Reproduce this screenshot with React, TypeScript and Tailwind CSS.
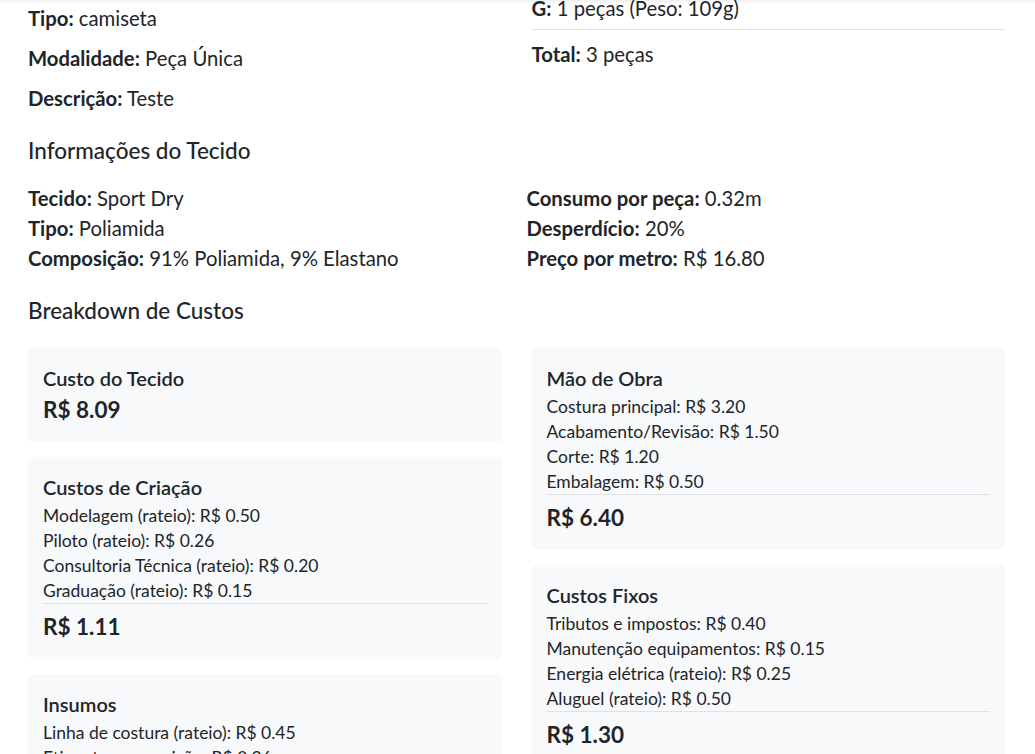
import React from "react";

// ─── Data ─────────────────────────────────────────────────────────────────────

type CostCard = {
  title: string;
  items?: string[];
  total: string;
};

const LEFT_CARDS: CostCard[] = [
  { title: "Custo do Tecido", total: "R$ 8.09" },
  {
    title: "Custos de Criação",
    items: [
      "Modelagem (rateio): R$ 0.50",
      "Piloto (rateio): R$ 0.26",
      "Consultoria Técnica (rateio): R$ 0.20",
      "Graduação (rateio): R$ 0.15",
    ],
    total: "R$ 1.11",
  },
  {
    title: "Insumos",
    items: [
      "Linha de costura (rateio): R$ 0.45",
      "Etiqueta composição: R$ 0.36",
      "Tag: R$ 0.30",
    ],
    total: "R$ 1.11",
  },
];

const RIGHT_CARDS: CostCard[] = [
  {
    title: "Mão de Obra",
    items: [
      "Costura principal: R$ 3.20",
      "Acabamento/Revisão: R$ 1.50",
      "Corte: R$ 1.20",
      "Embalagem: R$ 0.50",
    ],
    total: "R$ 6.40",
  },
  {
    title: "Custos Fixos",
    items: [
      "Tributos e impostos: R$ 0.40",
      "Manutenção equipamentos: R$ 0.15",
      "Energia elétrica (rateio): R$ 0.25",
      "Aluguel (rateio): R$ 0.50",
    ],
    total: "R$ 1.30",
  },
];

// ─── Bits ─────────────────────────────────────────────────────────────────────

function Field({ label, value }: { label: string; value: string }) {
  return (
    <p className="text-[20.3px] leading-[30px]">
      <strong className="font-bold">{label}:</strong> {value}
    </p>
  );
}

function Card({ card }: { card: CostCard }) {
  return (
    <div className="rounded-[5px] bg-[#f8f9fa] p-[15px]">
      <h4 className="text-[20px] leading-[30px] font-semibold">{card.title}</h4>
      {card.items ? (
        <>
          <div className="mt-[1px] text-[17.5px] leading-[25px]">
            {card.items.map((it) => (
              <div key={it}>{it}</div>
            ))}
          </div>
          <div className="border-t border-[#dee2e6] pt-[5px] text-[22.5px] leading-[35px] font-bold">
            {card.total}
          </div>
        </>
      ) : (
        <div className="text-[22.5px] leading-[34px] font-bold">{card.total}</div>
      )}
    </div>
  );
}

// ─── Page ─────────────────────────────────────────────────────────────────────

export default function App() {
  return (
    <div className="relative min-h-screen overflow-hidden bg-white text-[#212529] font-['Lato','Noto_Sans',sans-serif]">
      {/* faint shadow from the header above */}
      <div className="pointer-events-none absolute inset-x-0 top-0 h-[4px] bg-gradient-to-b from-black/[0.06] to-transparent" />

      <div className="pl-[28px] pr-[30px]">
        {/* Product summary */}
        <div className="-mt-[7px] grid grid-cols-2 gap-[30px]">
          <div className="flex flex-col gap-[10px] pt-[10px]">
            <Field label="Tipo" value="camiseta" />
            <Field label="Modalidade" value="Peça Única" />
            <Field label="Descrição" value="Teste" />
          </div>
          <div>
            <div className="border-b border-[#dee2e6] pb-[6px]">
              <Field label="G" value="1 peças (Peso: 109g)" />
            </div>
            <div className="mt-[9px]">
              <Field label="Total" value="3 peças" />
            </div>
          </div>
        </div>

        {/* Fabric */}
        <h3 className="mt-[20px] mb-[15px] text-[22.5px] leading-[35px] font-medium">
          Informações do Tecido
        </h3>
        <div className="grid grid-cols-2 gap-[20px]">
          <div>
            <Field label="Tecido" value="Sport Dry" />
            <Field label="Tipo" value="Poliamida" />
            <Field label="Composição" value="91% Poliamida, 9% Elastano" />
          </div>
          <div>
            <Field label="Consumo por peça" value="0.32m" />
            <Field label="Desperdício" value="20%" />
            <Field label="Preço por metro" value="R$ 16.80" />
          </div>
        </div>

        {/* Costs */}
        <h3 className="mt-[20px] mb-[20px] text-[22.5px] leading-[35px] font-medium">
          Breakdown de Custos
        </h3>
        <div className="grid grid-cols-2 items-start gap-[30px]">
          <div className="flex flex-col gap-[15px]">
            {LEFT_CARDS.map((c) => (
              <Card key={c.title} card={c} />
            ))}
          </div>
          <div className="flex flex-col gap-[15px]">
            {RIGHT_CARDS.map((c) => (
              <Card key={c.title} card={c} />
            ))}
          </div>
        </div>
      </div>
    </div>
  );
}
